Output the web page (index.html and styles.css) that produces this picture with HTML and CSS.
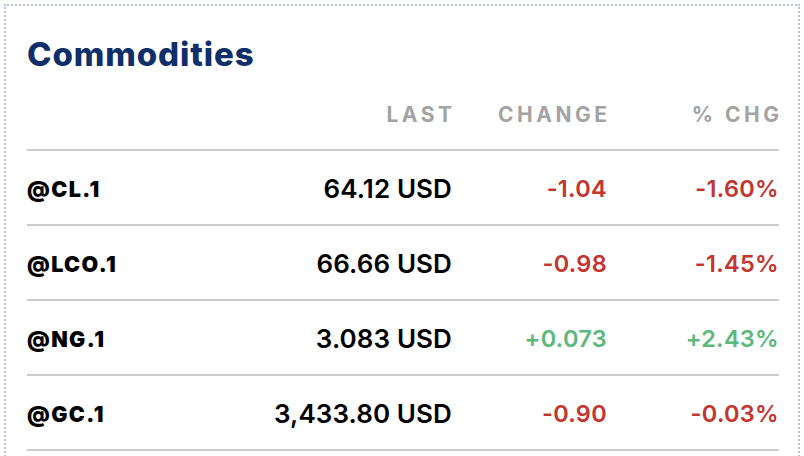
FILE: index.html
```html
<!DOCTYPE html>
<html lang="en">
<head>
<meta charset="utf-8">
<title>Commodities</title>
<link rel="stylesheet" href="styles.css">
</head>
<body>
<section class="card">
  <h2 class="title">Commodities</h2>
  <div class="table">
    <div class="row head">
      <div class="cell sym"></div>
      <div class="cell num">LAST</div>
      <div class="cell num">CHANGE</div>
      <div class="cell num">% CHG</div>
    </div>
    <div class="row">
      <div class="cell sym">@CL.1</div>
      <div class="cell num last">64.12 USD</div>
      <div class="cell num chg down">-1.04</div>
      <div class="cell num chg down">-1.60%</div>
    </div>
    <div class="row">
      <div class="cell sym">@LCO.1</div>
      <div class="cell num last">66.66 USD</div>
      <div class="cell num chg down">-0.98</div>
      <div class="cell num chg down">-1.45%</div>
    </div>
    <div class="row">
      <div class="cell sym">@NG.1</div>
      <div class="cell num last">3.083 USD</div>
      <div class="cell num chg up">+0.073</div>
      <div class="cell num chg up">+2.43%</div>
    </div>
    <div class="row">
      <div class="cell sym">@GC.1</div>
      <div class="cell num last">3,433.80 USD</div>
      <div class="cell num chg down">-0.90</div>
      <div class="cell num chg down">-0.03%</div>
    </div>
  </div>
</section>
</body>
</html>
```

FILE: styles.css
```css
html, body {
  margin: 0;
  padding: 0;
  background: #ffffff;
}

body {
  font-family: "Inter", "Liberation Sans", sans-serif;
  color: #000;
}

.card {
  margin: 4px 4px 0 4px;
  border: 2px dotted #b9c4d6;
  border-bottom: none;
  padding: 0 19px 0 21px;
  height: 460px;
  box-sizing: border-box;
}

.title {
  margin: 0;
  padding-top: 28px;
  font-size: 33px;
  line-height: 40px;
  font-weight: 800;
  color: #0f2f6b;
  letter-spacing: 0.9px;
}

.table {
  display: flex;
  flex-direction: column;
}

.row {
  display: grid;
  grid-template-columns: 1fr 200px 155px 172px;
  align-items: center;
  height: 75px;
  box-sizing: border-box;
  border-bottom: 2px solid #cccccc;
  padding-top: 2px;
}

.row.head {
  height: auto;
  padding-top: 30px;
  padding-bottom: 23px;
}

.head .cell {
  font-size: 21px;
  line-height: 22px;
  font-weight: 700;
  letter-spacing: 3.5px;
  color: #a3a3a3;
  margin-right: -3.5px;
}

.cell.num {
  text-align: right;
}

.sym {
  font-size: 21.5px;
  line-height: 24px;
  font-weight: 900;
  letter-spacing: 1.4px;
}

.last {
  font-size: 26px;
  line-height: 28px;
  font-weight: 600;
  letter-spacing: 0.1px;
}

.chg {
  font-size: 23.5px;
  line-height: 26px;
  font-weight: 600;
  letter-spacing: 0.3px;
}

.down {
  color: #c3352e;
}

.up {
  color: #5cb87b;
}
```
